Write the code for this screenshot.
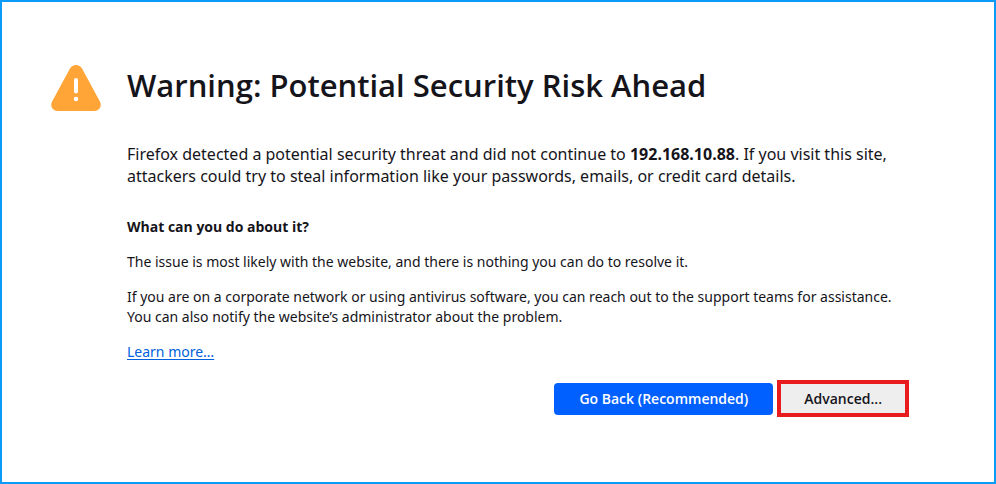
<main>
  <svg class="icon" viewBox="0 0 50 48" role="img" aria-label="Warning">
    <path fill="#ffa436" d="M19 4.500C21.500-.2 28.500-.2 31 4.500L48.900 37.500C51.300 42 48.400 47 43.500 47H6.500C1.600 47-1.300 42 1.100 37.500Z" />
    <path d="M25 16V27.500" stroke="#fff" stroke-width="4" stroke-linecap="round" />
    <circle cx="25" cy="35" r="2.300" fill="#fff" />
  </svg>
  <div class="content">
    <h1>Warning: Potential Security Risk Ahead</h1>
    <p class="intro">Firefox detected a potential security threat and did not continue to <b>192.168.10.88</b>. If you visit this site, attackers could try to steal information like your passwords, emails, or credit card details.</p>
    <h2>What can you do about it?</h2>
    <p>The issue is most likely with the website, and there is nothing you can do to resolve it.</p>
    <p>If you are on a corporate network or using antivirus software, you can reach out to the support teams for assistance. You can also notify the website’s administrator about the problem.</p>
    <a href="#learn">Learn more…</a>
    <div class="actions">
      <button class="primary">Go Back (Recommended)</button>
      <button class="advanced">Advanced...</button>
    </div>
  </div>
</main>

<style>
  :global(body) { background: #fff; }
  main {
    box-sizing: border-box;
    min-height: 100vh;
    display: flex;
    align-items: flex-start;
    gap: 26px;
    padding: 62px 85px 60px 49px;
    border: 2px solid #0a9bfb;
    color: #15141a;
    font: 14px/20px "Noto Sans", sans-serif;
  }
  .icon { flex: none; width: 50px; height: 48px; }
  .content { flex: 1; min-width: 0; }
  h1 { margin: 0 0 37px; font-family: "Open Sans", sans-serif; font-size: 31px; line-height: 42px; font-weight: 600; }
  .intro { margin: 0 0 30px; font-size: 16px; line-height: 22px; }
  h2 { margin: 0 0 15px; font-family: "Open Sans", sans-serif; font-size: 14px; line-height: 20px; font-weight: 700; }
  p { margin: 0 0 15px; }
  a { color: #0061e0; text-underline-offset: 2px; }
  .actions { display: flex; align-items: center; justify-content: flex-end; gap: 4px; margin-top: 18px; }
  button { height: 32px; border: 0; border-radius: 4px; font: 600 14px/20px "Open Sans", sans-serif; }
  .primary { padding: 0 25px; background: #0060ff; color: #fff; }
  .advanced { padding: 0 23px; background: #eee; color: #15141a; border: 4px solid #e81c1c; border-radius: 0; height: 37px; }
</style>
